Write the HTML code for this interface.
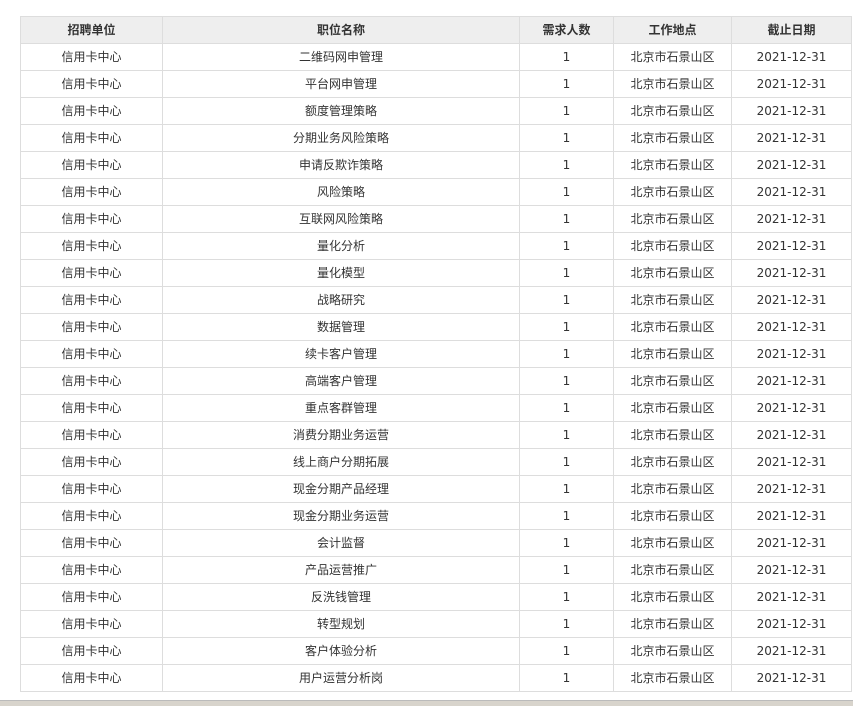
<!DOCTYPE html>
<html><head><meta charset="utf-8"><style>
body{margin:0;background:#fff;width:853px;height:705px;overflow:hidden;position:relative;font-family:"DejaVu Sans","Noto Sans CJK SC",sans-serif;}
table{position:absolute;left:20px;top:16px;border-collapse:collapse;font-size:12px;color:#333;}
td,th{border:1px solid #ddd;text-align:center;height:26px;padding:0;line-height:26px;}
th{background:#eee;font-weight:bold;color:#333;font-size:12px;}
.bar{position:absolute;left:0;top:700px;width:853px;height:5px;background:#d8d4cc;border-top:1px solid #bbb;}
</style></head><body>
<table>
<colgroup><col style="width:142px"><col style="width:357px"><col style="width:94px"><col style="width:118px"><col style="width:120px"></colgroup>
<tr><th>招聘单位</th><th>职位名称</th><th>需求人数</th><th>工作地点</th><th>截止日期</th></tr>
<tr><td>信用卡中心</td><td>二维码网申管理</td><td>1</td><td>北京市石景山区</td><td>2021-12-31</td></tr>
<tr><td>信用卡中心</td><td>平台网申管理</td><td>1</td><td>北京市石景山区</td><td>2021-12-31</td></tr>
<tr><td>信用卡中心</td><td>额度管理策略</td><td>1</td><td>北京市石景山区</td><td>2021-12-31</td></tr>
<tr><td>信用卡中心</td><td>分期业务风险策略</td><td>1</td><td>北京市石景山区</td><td>2021-12-31</td></tr>
<tr><td>信用卡中心</td><td>申请反欺诈策略</td><td>1</td><td>北京市石景山区</td><td>2021-12-31</td></tr>
<tr><td>信用卡中心</td><td>风险策略</td><td>1</td><td>北京市石景山区</td><td>2021-12-31</td></tr>
<tr><td>信用卡中心</td><td>互联网风险策略</td><td>1</td><td>北京市石景山区</td><td>2021-12-31</td></tr>
<tr><td>信用卡中心</td><td>量化分析</td><td>1</td><td>北京市石景山区</td><td>2021-12-31</td></tr>
<tr><td>信用卡中心</td><td>量化模型</td><td>1</td><td>北京市石景山区</td><td>2021-12-31</td></tr>
<tr><td>信用卡中心</td><td>战略研究</td><td>1</td><td>北京市石景山区</td><td>2021-12-31</td></tr>
<tr><td>信用卡中心</td><td>数据管理</td><td>1</td><td>北京市石景山区</td><td>2021-12-31</td></tr>
<tr><td>信用卡中心</td><td>续卡客户管理</td><td>1</td><td>北京市石景山区</td><td>2021-12-31</td></tr>
<tr><td>信用卡中心</td><td>高端客户管理</td><td>1</td><td>北京市石景山区</td><td>2021-12-31</td></tr>
<tr><td>信用卡中心</td><td>重点客群管理</td><td>1</td><td>北京市石景山区</td><td>2021-12-31</td></tr>
<tr><td>信用卡中心</td><td>消费分期业务运营</td><td>1</td><td>北京市石景山区</td><td>2021-12-31</td></tr>
<tr><td>信用卡中心</td><td>线上商户分期拓展</td><td>1</td><td>北京市石景山区</td><td>2021-12-31</td></tr>
<tr><td>信用卡中心</td><td>现金分期产品经理</td><td>1</td><td>北京市石景山区</td><td>2021-12-31</td></tr>
<tr><td>信用卡中心</td><td>现金分期业务运营</td><td>1</td><td>北京市石景山区</td><td>2021-12-31</td></tr>
<tr><td>信用卡中心</td><td>会计监督</td><td>1</td><td>北京市石景山区</td><td>2021-12-31</td></tr>
<tr><td>信用卡中心</td><td>产品运营推广</td><td>1</td><td>北京市石景山区</td><td>2021-12-31</td></tr>
<tr><td>信用卡中心</td><td>反洗钱管理</td><td>1</td><td>北京市石景山区</td><td>2021-12-31</td></tr>
<tr><td>信用卡中心</td><td>转型规划</td><td>1</td><td>北京市石景山区</td><td>2021-12-31</td></tr>
<tr><td>信用卡中心</td><td>客户体验分析</td><td>1</td><td>北京市石景山区</td><td>2021-12-31</td></tr>
<tr><td>信用卡中心</td><td>用户运营分析岗</td><td>1</td><td>北京市石景山区</td><td>2021-12-31</td></tr>
</table>
<div class="bar"></div>
</body></html>
